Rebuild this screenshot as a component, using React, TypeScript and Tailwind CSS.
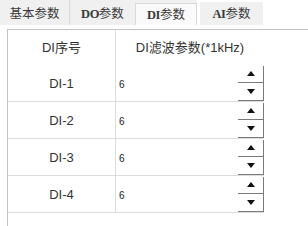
import React from 'react';

const FONT = { fontFamily: '"Liberation Sans", "Noto Sans CJK SC", sans-serif' };
const TAB_FONT = { fontFamily: '"Liberation Serif", "Noto Sans CJK SC", serif' };

const rows = ['DI-1', 'DI-2', 'DI-3', 'DI-4'];

const Spinner = () => (
  <div className="flex flex-col w-[26px] h-[35px]">
    <div className="flex-1 flex items-center justify-center border-b border-r border-[#7a7a7a]">
      <svg width="8" height="5" viewBox="0 0 8 5">
        <path d="M0 5 L4 0 L8 5 Z" fill="#111" />
      </svg>
    </div>
    <div className="flex-1 flex items-center justify-center border-b border-r border-[#7a7a7a]">
      <svg width="8" height="5" viewBox="0 0 8 5">
        <path d="M0 0 L4 5 L8 0 Z" fill="#111" />
      </svg>
    </div>
  </div>
);

export default function App() {
  return (
    <div className="w-[308px] h-[226px] bg-white overflow-hidden text-[#333]" style={FONT}>
      {/* Tabs */}
      <div className="flex h-[25px] text-[12.5px] text-[#3a3a3a]" style={TAB_FONT}>
        <div className="w-[70px] bg-[#f0f0f0] flex items-center justify-center pt-[4px] border-r border-[#dadada]">
          基本参数
        </div>
        <div className="w-[65px] bg-[#f0f0f0] flex items-center justify-center pt-[4px]">
          <span className="font-semibold tracking-[-0.5px]">DO</span>参数
        </div>
        <div className="w-[62px] bg-[#f0f0f0] flex">
          <div className="flex-1 mt-[3px] bg-[#fafafa] border-t border-l border-r border-[#d9d9d9] flex items-center justify-center pt-[2px]">
            <span className="font-semibold tracking-[-0.5px]">DI</span>参数
          </div>
        </div>
        <div className="w-[3px] bg-white" />
        <div className="w-[63px] mt-[2px] bg-[#f0f0f0] flex items-center justify-center pt-[2px]">
          <span className="font-semibold tracking-[-0.5px]">AI</span>参数
        </div>
        <div className="flex-1 bg-white" />
      </div>

      {/* Table */}
      <div className="pl-[7px] pt-[4px]">
        <div className="border-t border-l border-[#c4c4c4] h-[200px]">
          <div className="flex h-[35px] w-[256px] text-[13px]">
            <div className="w-[108px] border-r border-[#dcdcdc] flex items-center justify-center">DI序号</div>
            <div className="flex-1 flex items-center justify-center">DI滤波参数(*1kHz)</div>
          </div>
          {rows.map((r) => (
            <div key={r} className="flex h-[37px] w-[256px] border-b border-[#dcdcdc]">
              <div className="w-[108px] border-r border-[#dcdcdc] flex items-center justify-center text-[13px] pt-[2px]">{r}</div>
              <div className="flex-1 flex items-center justify-between">
                <span className="pl-[3px] text-[10px] text-[#222] pt-[2px]">6</span>
                <Spinner />
              </div>
            </div>
          ))}
        </div>
      </div>
    </div>
  );
}
